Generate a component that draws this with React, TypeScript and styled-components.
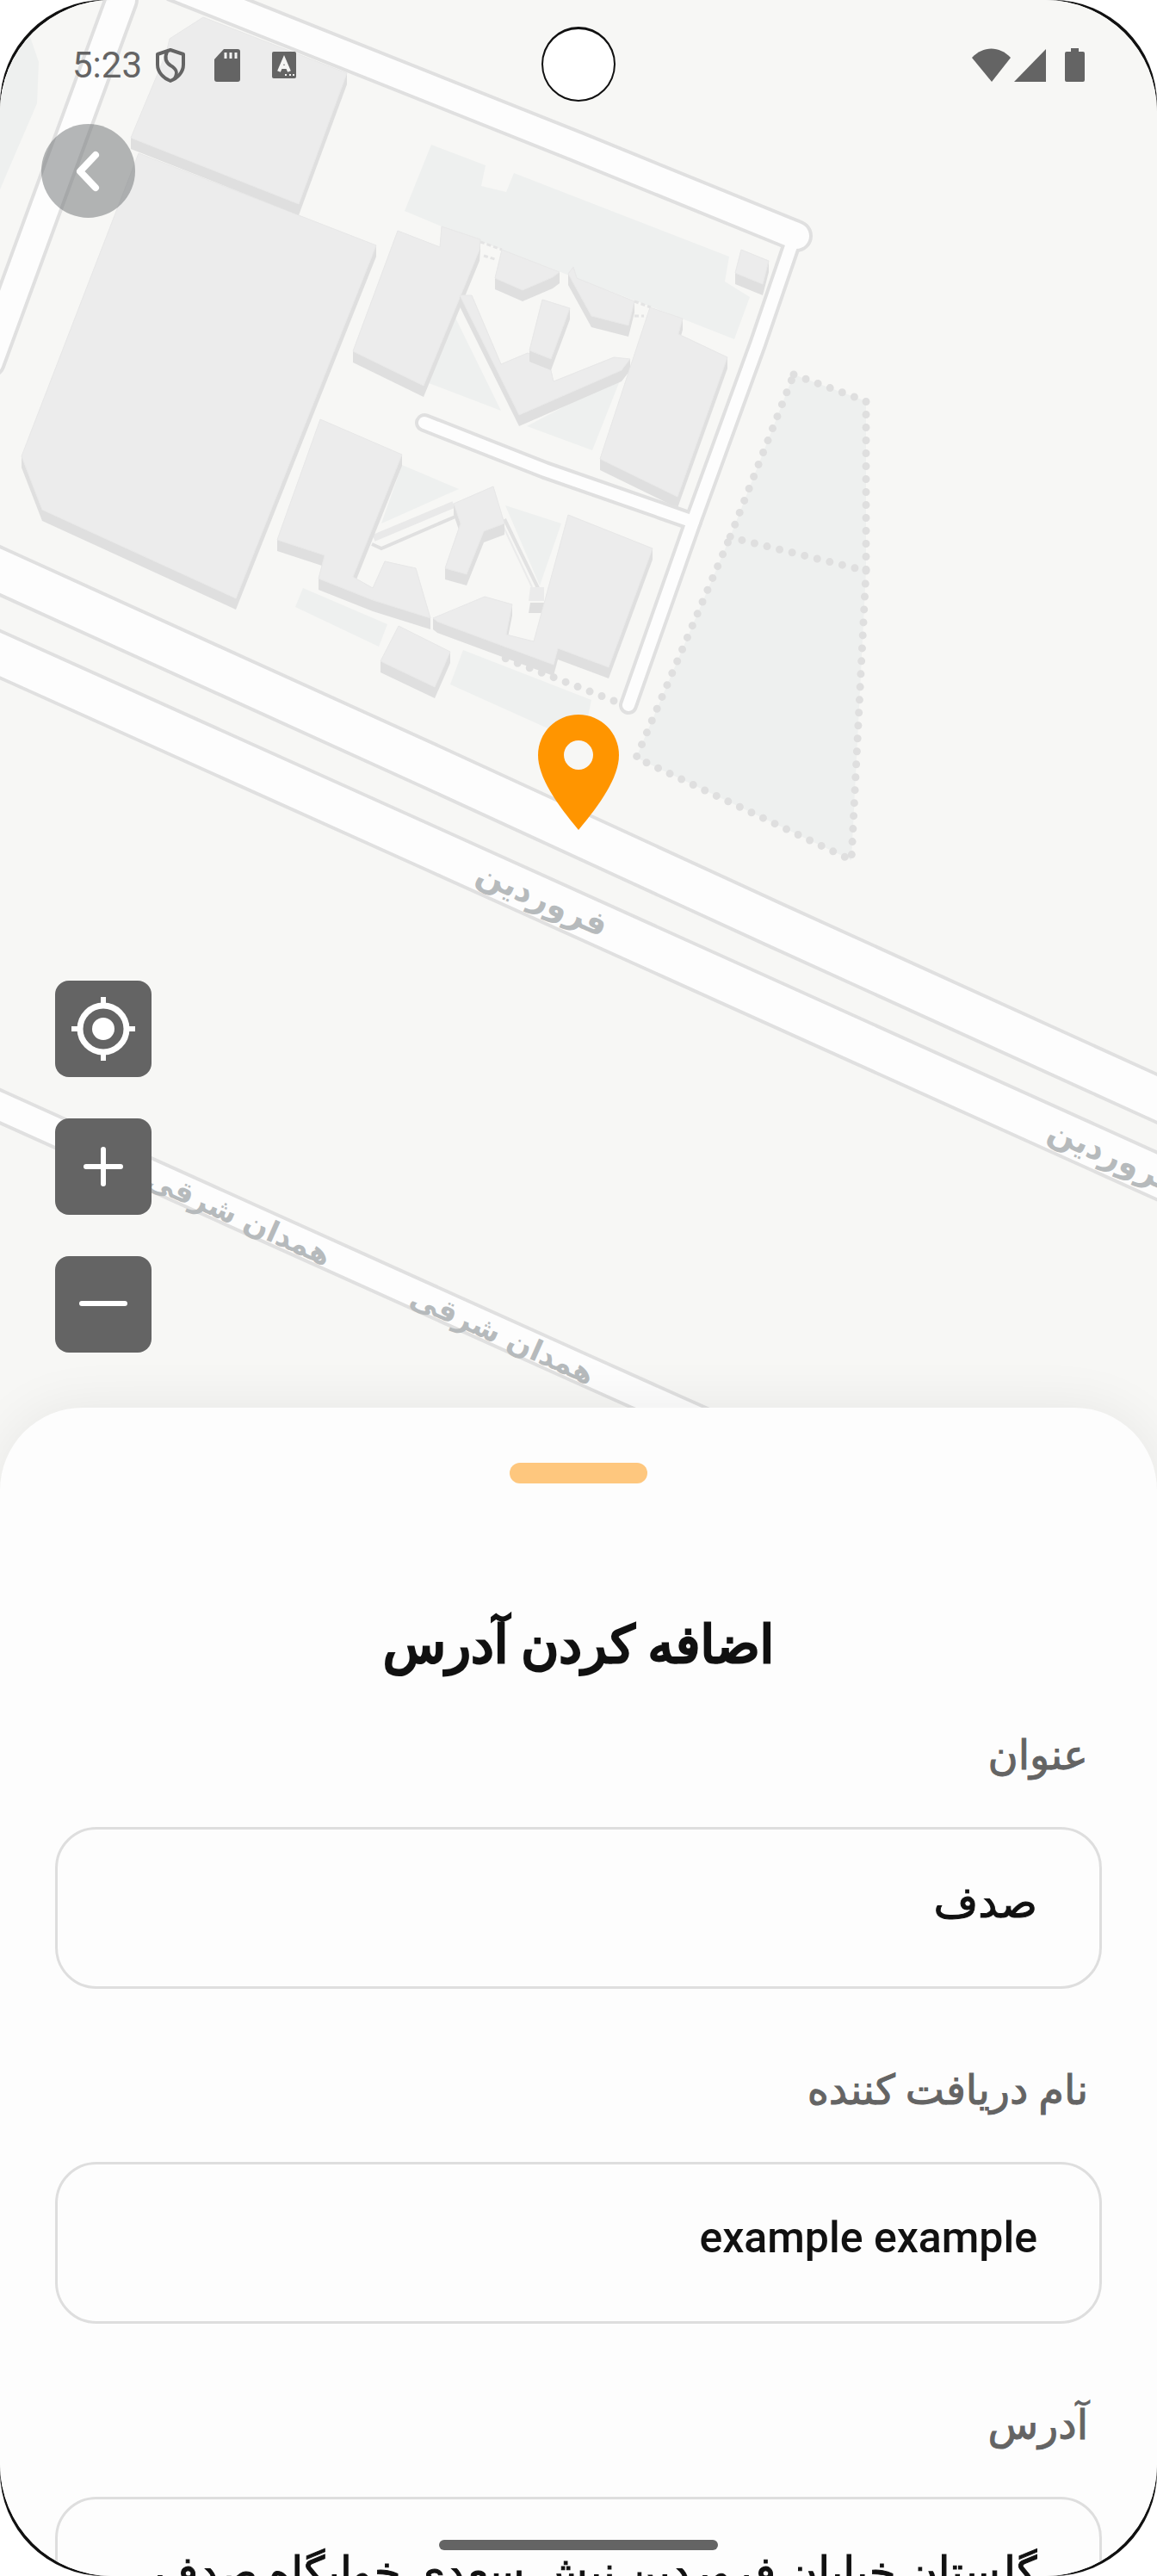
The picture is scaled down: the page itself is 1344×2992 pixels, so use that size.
import React from "react";
import styled, { createGlobalStyle } from "styled-components";

const GlobalStyle = createGlobalStyle`
  *, *::before, *::after { box-sizing: border-box; }
  html, body, #root { height: 100%; }
  body { margin: 0; background: #fff; }
`;

const ink = "#646464";
const persian = `Roboto, "DejaVu Sans", sans-serif`;

/* ---------- device shell ---------- */

const Bezel = styled.div`
  height: 100vh;
  background: #111;
  border-radius: 121px;
  overflow: hidden;
`;

const Screen = styled.main`
  position: relative;
  height: 100%;
  display: flex;
  flex-direction: column;
  background: #f7f7f5;
  border-radius: 130px;
  overflow: hidden;
`;

const CameraCutout = styled.div`
  position: absolute;
  top: 31px;
  left: 50%;
  width: 86px;
  height: 87px;
  transform: translateX(-50%);
  border: 2px solid #111;
  border-top-width: 3px;
  border-radius: 50%;
  background: #fff;
`;

const HomeIndicator = styled.div`
  position: absolute;
  bottom: 30px;
  left: 50%;
  width: 324px;
  height: 12px;
  transform: translateX(-50%);
  border-radius: 6px;
  background: ${ink};
`;

/* ---------- map stage ---------- */

const Stage = styled.section`
  position: relative;
  flex: 1;
  min-height: 0;
  display: flex;
  flex-direction: column;
`;

const MapCanvas = styled.svg`
  position: absolute;
  top: 0;
  left: 0;
  width: 100%;
  height: calc(100% + 125px);
`;

const MapLabel = styled.text<{ $size: number }>`
  font-family: "DejaVu Sans", sans-serif;
  font-size: ${(p) => p.$size}px;
  font-weight: 700;
  fill: #b6babc;
  text-anchor: middle;
`;

const Pin = styled.svg`
  position: absolute;
  top: 830px;
  left: 50%;
  width: 94px;
  height: 134px;
  transform: translateX(-50%);
`;

const StatusBar = styled.header`
  position: relative;
  display: flex;
  align-items: center;
  justify-content: space-between;
  height: 144px;
  padding: 8px 84px 0;
`;

const StatusGroup = styled.div<{ $gap: number }>`
  display: flex;
  align-items: center;
  gap: ${(p) => p.$gap}px;
  color: ${ink};
`;

const Clock = styled.time`
  margin-right: -12px;
  font: 400 42px/48px Roboto, sans-serif;
`;

const StatusIcon = styled.svg`
  display: block;
  width: 42px;
  height: 42px;
`;

const SignalIcon = styled.svg<{ $width: number }>`
  display: block;
  width: ${(p) => p.$width}px;
  height: 40px;
`;

const Battery = styled(SignalIcon)`
  margin-left: 18px;
`;

const BackButton = styled.button`
  position: relative;
  display: grid;
  place-items: center;
  width: 109px;
  height: 109px;
  margin: 0 0 auto 48px;
  padding: 0;
  border: 0;
  border-radius: 50%;
  background: rgba(108, 112, 114, 0.5);
`;

const Controls = styled.nav`
  position: relative;
  display: flex;
  flex-direction: column;
  align-items: flex-start;
  gap: 48px;
  padding: 0 64px 64px;
`;

const ControlButton = styled.button`
  display: grid;
  place-items: center;
  width: 112px;
  height: 112px;
  padding: 0;
  border: 0;
  border-radius: 16px;
  background: ${ink};
`;

/* ---------- bottom sheet ---------- */

const Sheet = styled.section`
  position: relative;
  flex: 0 0 1357px;
  display: flex;
  flex-direction: column;
  padding: 64px 64px 0;
  border-radius: 96px 96px 0 0;
  background: #fdfdfd;
  box-shadow: 0 0 64px rgba(0, 0, 0, 0.07);
  font-family: ${persian};
  overflow: hidden;
`;

const Handle = styled.div`
  flex: none;
  align-self: center;
  width: 160px;
  height: 24px;
  border-radius: 12px;
  background: #fec77e;
`;

const Title = styled.h1`
  margin: 148px 0 56px;
  font-size: 60px;
  font-weight: 400;
  line-height: 80px;
  text-align: center;
  color: #111;
  -webkit-text-stroke: 3px #111;
`;

const Form = styled.form`
  display: flex;
  flex-direction: column;
  gap: 86px;
`;

const Field = styled.div`
  display: flex;
  flex-direction: column;
  gap: 51px;
`;

const FieldLabel = styled.label`
  padding-inline: 16px;
  font-size: 48px;
  line-height: 64px;
  color: ${ink};
  -webkit-text-stroke: 1px ${ink};
`;

const FieldInput = styled.input<{ $latin: boolean }>`
  width: 100%;
  height: 188px;
  padding: 0 72px 12px;
  border: 3px solid #dedede;
  border-radius: 48px;
  outline: 0;
  background: transparent;
  color: #111;
  font-family: ${persian};
  font-size: 50px;
  font-weight: 500;
  text-align: right;
  -webkit-text-stroke: ${(p) => (p.$latin ? "0" : "1px #111")};
`;

/* ---------- map data ---------- */

type Pt = [number, number];
const str = (pts: Pt[]) => pts.map((p) => p.join(",")).join(" ");

const greens: Pt[][] = [
  [[0, 0], [16, 10], [34, 40], [45, 72], [43, 120], [0, 220]],
  [[501, 168], [564, 192], [559, 216], [588, 223], [597, 201], [847, 298], [842, 327], [871, 345], [853, 394], [792, 370], [513, 263], [470, 245]],
  [[528, 367], [582, 477], [498, 445]],
  [[722, 437], [688, 523], [612, 495]],
  [[467, 540], [533, 568], [443, 608]],
  [[587, 587], [652, 608], [627, 680]],
  [[352, 683], [450, 725], [440, 751], [343, 705]],
  [[538, 755], [687, 813], [683, 832], [672, 862], [523, 795]],
  [[922, 435], [1006, 466], [1006, 663], [989, 999], [739, 880], [848, 624]],
];

const buildings: Pt[][] = [
  [[161, 178], [347, 250], [437, 285], [274, 695], [49, 592], [25, 530]],
  [[236, 20], [403, 85], [347, 237], [152, 160], [193, 62], [197, 45]],
  [[462, 268], [511, 287], [513, 263], [558, 278], [557, 290], [492, 448], [410, 408]],
  [[861, 290], [893, 303], [886, 330], [854, 317]],
  [[583, 290], [650, 316], [642, 322], [607, 337], [575, 323]],
  [[660, 318], [666, 310], [670, 323], [737, 350], [730, 378], [687, 367]],
  [[534, 343], [548, 343], [582, 423], [613, 410], [638, 422], [643, 443], [713, 415], [732, 417], [722, 430], [603, 482]],
  [[630, 348], [662, 358], [640, 417], [615, 407]],
  [[755, 357], [793, 370], [788, 388], [845, 415], [787, 577], [697, 533]],
  [[372, 487], [467, 528], [410, 670], [433, 683], [447, 652], [483, 660], [500, 718], [433, 697], [370, 672], [377, 645], [322, 627]],
  [[503, 718], [563, 693], [595, 702], [588, 737], [620, 745], [660, 598], [758, 637], [707, 775], [648, 753], [643, 772], [508, 722]],
  [[527, 585], [573, 565], [586, 608], [562, 617], [542, 667], [517, 660], [535, 608]],
  [[463, 727], [523, 757], [505, 798], [442, 768]],
];

const roads: { d: string; width: number }[] = [
  { d: "M141 0L-13 420", width: 36 },
  { d: "M493 491L633 546L805 606", width: 18 },
  { d: "M921 280L880 400L805 606L730 819", width: 18 },
  { d: "M203 -16L672 171L925 274", width: 34 },
  { d: "M-20 654L0 663L500 890L900 1074L1364 1285", width: 51 },
  { d: "M-20 751L0 760L500 985L1364 1375", width: 50 },
  { d: "M-20 1276L0 1285L672 1588L900 1690", width: 35 },
];

const fences = [
  "M922 435L1006 466L1006 663L848 624Z",
  "M1006 663L989 999L739 880L848 624",
  "M713 814L580 762",
];

const DEPTH = 13;

function Building({ pts }: { pts: Pt[] }) {
  return (
    <g>
      <g fill="#dfdfdf">
        {pts.map((p, i) => {
          const q = pts[(i + 1) % pts.length];
          return <polygon key={i} points={str([p, q, [q[0], q[1] + DEPTH], [p[0], p[1] + DEPTH]])} />;
        })}
      </g>
      <polygon points={str(pts)} fill="#ececec" stroke="#e8e8e8" strokeWidth="1" />
    </g>
  );
}

function CityMap() {
  return (
    <MapCanvas viewBox="0 0 1344 1760" preserveAspectRatio="xMidYMin slice" role="img" aria-label="نقشه">
      <rect width="1344" height="1760" fill="#f7f7f5" />
      {greens.map((g, i) => (
        <polygon key={i} points={str(g)} fill="#eef0ef" />
      ))}
      <g fill="none" stroke="#dfdfdf" strokeWidth="9" strokeLinecap="round" strokeDasharray="0 15">
        {fences.map((d) => <path key={d} d={d} />)}
      </g>
      <g fill="none">
        <path d="M527 586L434 625" stroke="#e9e9e9" strokeWidth="8" />
        <path d="M529 600L443 637L432 632" stroke="#e0e0e0" strokeWidth="4" />
        <path d="M586 603L625 683" stroke="#e2e2e2" strokeWidth="4" />
        <path d="M583 608L618 682" stroke="#ebebeb" strokeWidth="2" />
        <path d="M616 682H632V698H614Z" fill="#ebebeb" />
        <path d="M616 700H634V712H614Z" fill="#dfdfdf" />
        <path d="M558 281L583 290M737 350L756 357M562 297L575 301M737 367H748" stroke="#e4e4e4" strokeWidth="3" strokeDasharray="5 3" />
      </g>
      {buildings.map((b, i) => (
        <Building key={i} pts={b} />
      ))}
      <g fill="none" strokeLinecap="round" strokeLinejoin="round">
        {roads.map((r) => <path key={r.d} d={r.d} stroke="#e0e0e0" strokeWidth={r.width + 4} />)}
        {roads.map((r) => <path key={r.d} d={r.d} stroke="#fdfdfd" strokeWidth={r.width - 4} />)}
      </g>
      <MapLabel $size={38} transform="translate(625 1056) rotate(24)">فروردین</MapLabel>
      <MapLabel $size={38} transform="translate(1289 1355) rotate(24)">فروردین</MapLabel>
      <MapLabel $size={34} transform="translate(273 1424) rotate(24)">همدان شرقی</MapLabel>
      <MapLabel $size={34} transform="translate(579 1562) rotate(24)">همدان شرقی</MapLabel>
    </MapCanvas>
  );
}

const fields = [
  { id: "title", label: "عنوان", value: "صدف", latin: false },
  { id: "receiver", label: "نام دریافت کننده", value: "example example", latin: true },
  { id: "address", label: "آدرس", value: "گلستان خیابان فروردین نبش سعدی خوابگاه صدف", latin: false },
];

export default function App() {
  return (
    <Bezel>
      <GlobalStyle />
      <Screen>
        <Stage>
          <CityMap />
          <Pin viewBox="0 0 94 134" aria-hidden="true">
            <path fill="#ff9500" d="M47 0C21 0 0 21 0 47C0 73 22 104 47 134C72 104 94 73 94 47C94 21 73 0 47 0Z" />
            <circle cx="47" cy="47" r="17" fill="#f7f7f5" />
          </Pin>
          <StatusBar>
            <StatusGroup $gap={24}>
              <Clock>5:23</Clock>
              <StatusIcon viewBox="0 0 42 42" fill="none" stroke="currentColor" strokeWidth="4" strokeLinejoin="round" aria-hidden="true">
                <path d="M21 3L36 8V20C36 29 29 36 21 39C13 36 6 29 6 20V8Z" />
                <path d="M17 5C14 12 15 17 21 21C28 25 30 29 26 36" />
              </StatusIcon>
              <StatusIcon viewBox="0 0 42 42" aria-hidden="true">
                <path fill="currentColor" d="M17 2H33Q36 2 36 5V37Q36 40 33 40H9Q6 40 6 37V14Z" />
                <path d="M19 6V13M25 6V13M31 6V13" stroke="#f4f4f3" strokeWidth="3" />
              </StatusIcon>
              <StatusIcon viewBox="0 0 42 42" aria-hidden="true">
                <rect x="7" y="5" width="28" height="31" rx="2" fill="currentColor" />
                <path d="M15 28L21 14L27 28M18 23H24" fill="none" stroke="#f4f4f3" strokeWidth="4" />
                <path d="M22 32H24M27 32H29M31 32H33" stroke="#f4f4f3" strokeWidth="2" />
              </StatusIcon>
            </StatusGroup>
            <StatusGroup $gap={4}>
              <SignalIcon $width={45} viewBox="0 0 45 40" aria-hidden="true">
                <path fill="currentColor" d="M0 11C13 -3 32 -3 45 11L23 39Z" />
              </SignalIcon>
              <SignalIcon $width={37} viewBox="0 0 37 40" aria-hidden="true">
                <path fill="currentColor" d="M37 1V39H0Z" />
              </SignalIcon>
              <Battery $width={23} viewBox="0 0 23 40" aria-hidden="true">
                <path fill="currentColor" d="M7 0H16V4H21Q23 4 23 6V37Q23 39 21 39H2Q0 39 0 37V6Q0 4 2 4H7Z" />
              </Battery>
            </StatusGroup>
          </StatusBar>
          <BackButton type="button" aria-label="بازگشت">
            <svg width="48" height="48" viewBox="0 0 48 48" fill="none" stroke="#fff" strokeWidth="8" strokeLinecap="round" strokeLinejoin="round">
              <path d="M32 5L14 24L32 43" />
            </svg>
          </BackButton>
          <Controls>
            <ControlButton type="button" aria-label="موقعیت من">
              <svg width="76" height="76" viewBox="0 0 76 76" fill="none" stroke="#fff">
                <circle cx="38" cy="38" r="27" strokeWidth="7" />
                <path d="M38 1V9M38 67V75M1 38H9M67 38H75" strokeWidth="6" />
                <circle cx="38" cy="38" r="13" fill="#fff" stroke="none" />
              </svg>
            </ControlButton>
            <ControlButton type="button" aria-label="بزرگ‌نمایی">
              <svg width="60" height="60" viewBox="0 0 60 60" stroke="#fff" strokeWidth="6" strokeLinecap="round">
                <path d="M10 30H50M30 10V50" />
              </svg>
            </ControlButton>
            <ControlButton type="button" aria-label="کوچک‌نمایی">
              <svg width="60" height="60" viewBox="0 0 60 60" stroke="#fff" strokeWidth="6" strokeLinecap="round">
                <path d="M5 29H55" />
              </svg>
            </ControlButton>
          </Controls>
        </Stage>
        <Sheet dir="rtl" lang="fa">
          <Handle />
          <Title>اضافه کردن آدرس</Title>
          <Form>
            {fields.map((f) => (
              <Field key={f.id}>
                <FieldLabel htmlFor={f.id}>{f.label}</FieldLabel>
                <FieldInput id={f.id} type="text" defaultValue={f.value} $latin={f.latin} />
              </Field>
            ))}
          </Form>
        </Sheet>
        <CameraCutout />
        <HomeIndicator />
      </Screen>
    </Bezel>
  );
}
